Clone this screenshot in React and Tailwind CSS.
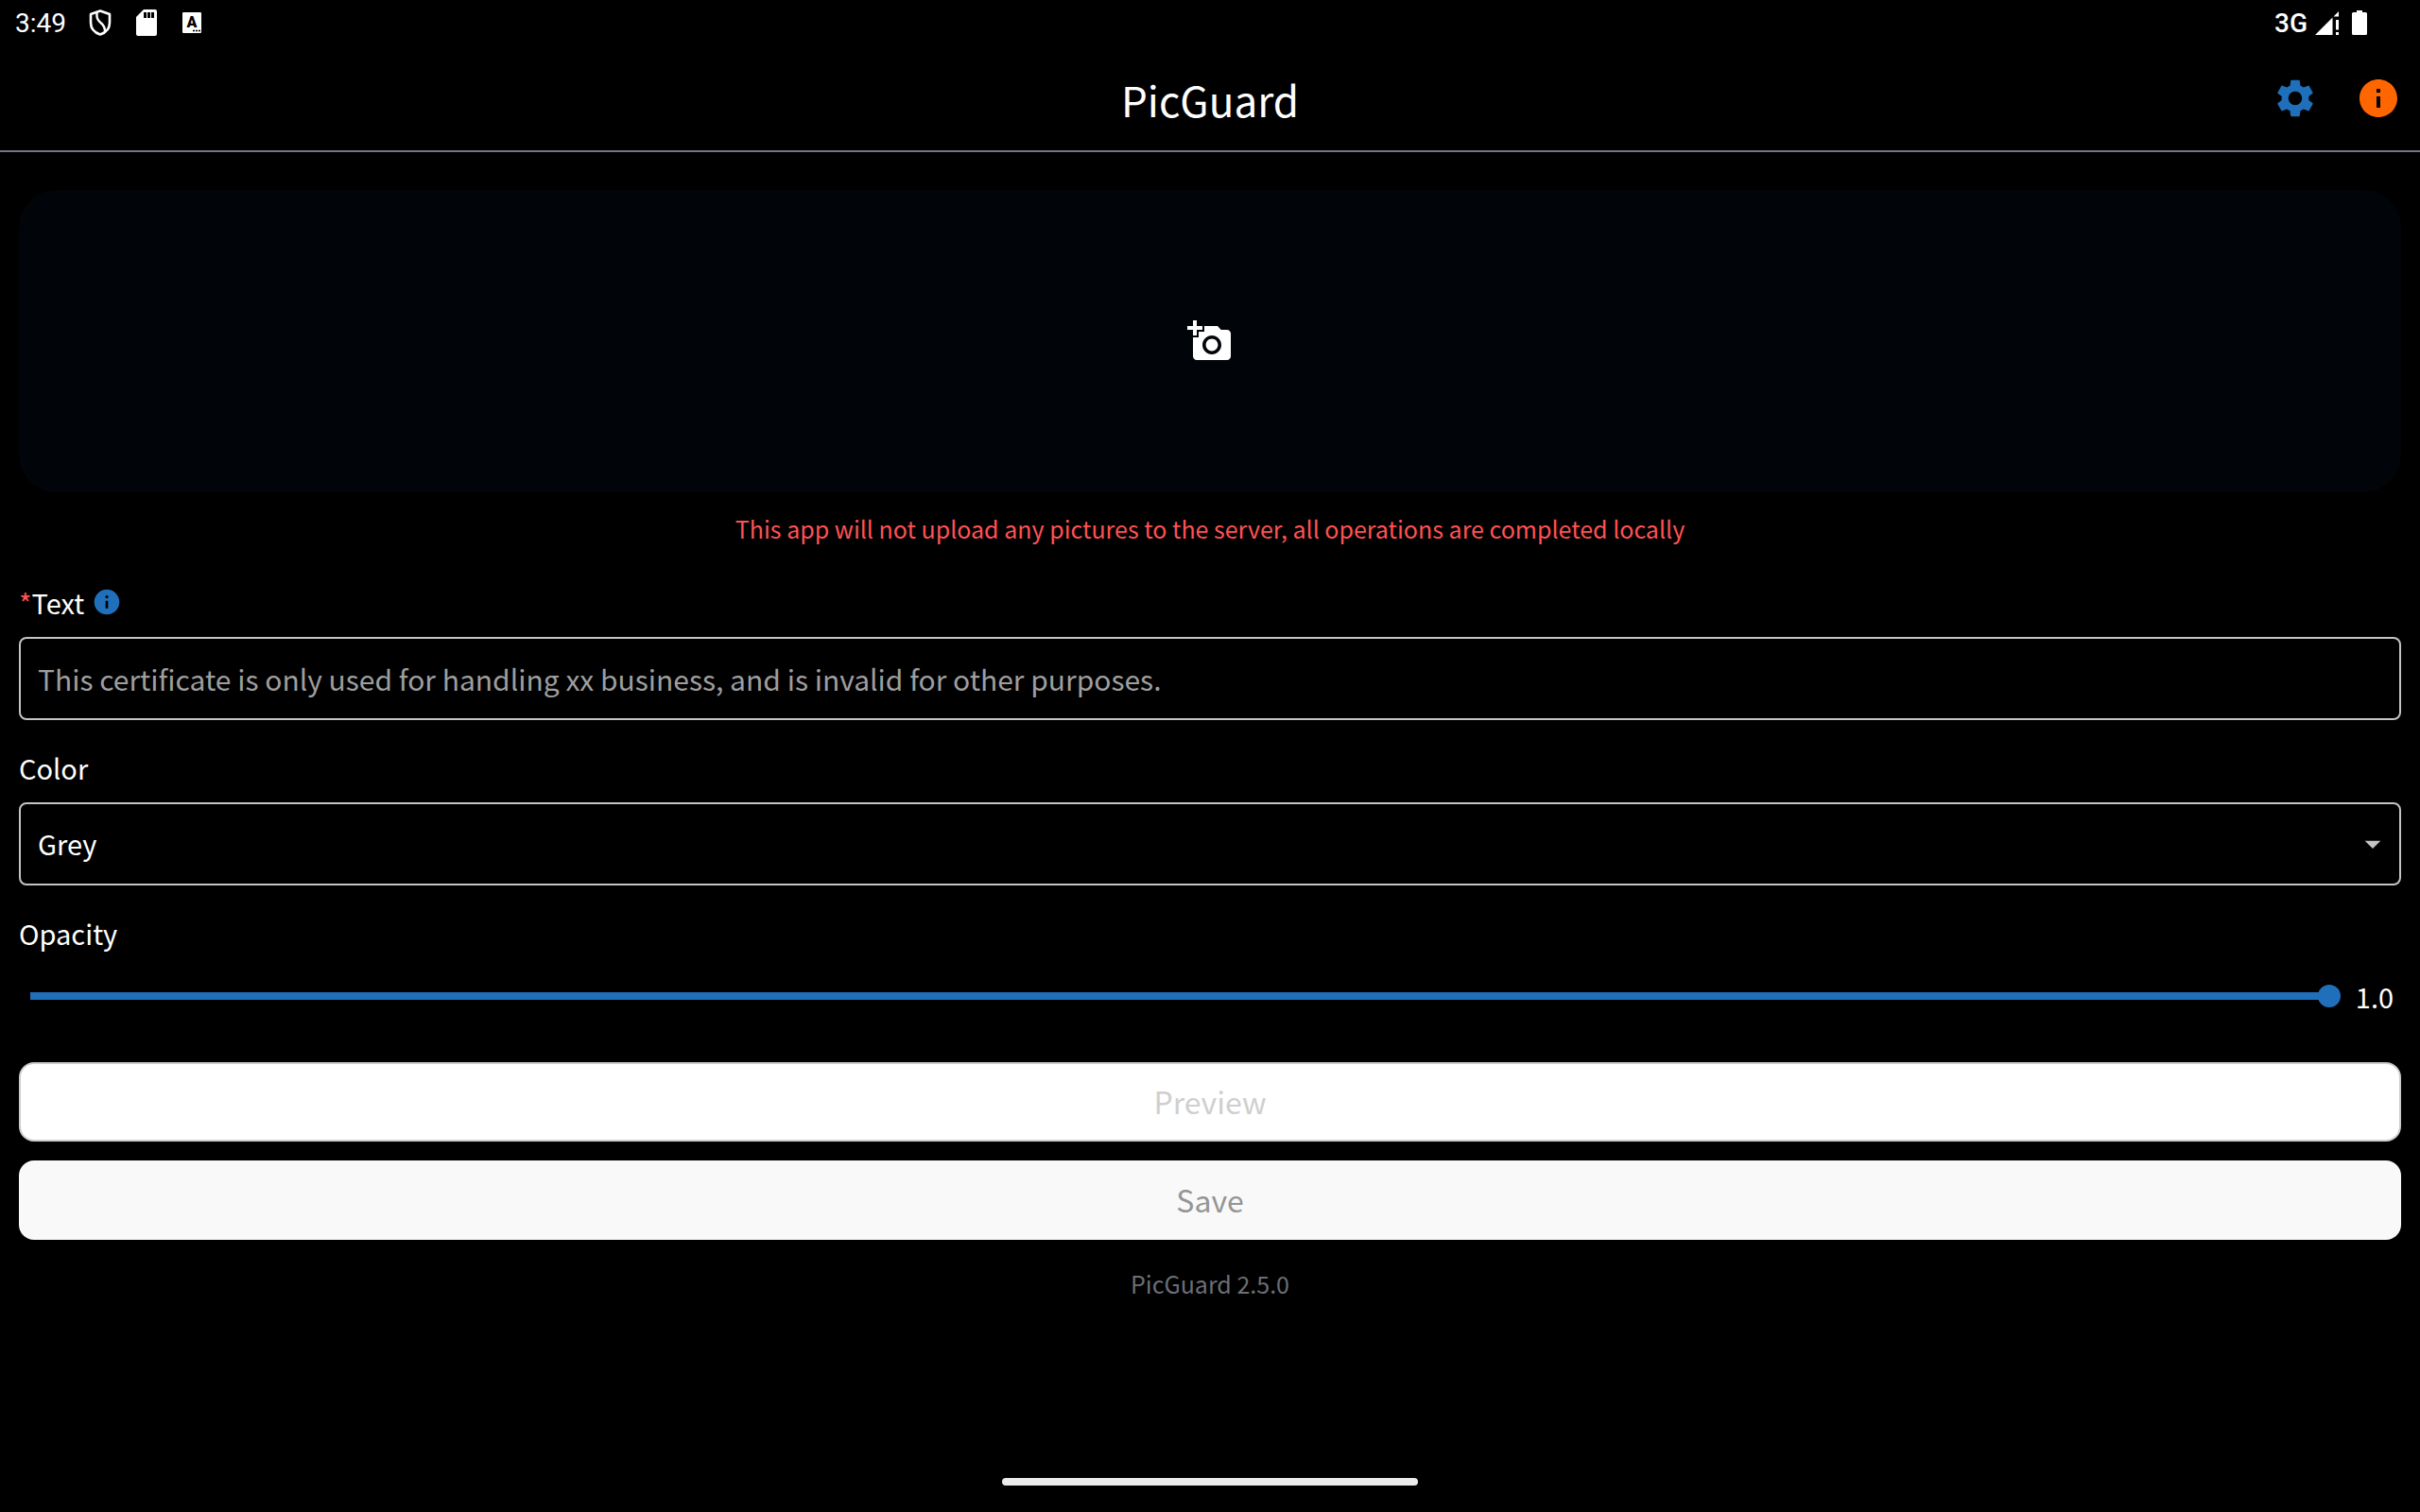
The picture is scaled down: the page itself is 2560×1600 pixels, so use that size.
import { useState } from "react";
import { MdSettings, MdInfo, MdAddAPhoto, MdArrowDropDown } from "react-icons/md";

function StatusBar() {
  return (
    <div className="flex h-12 items-center justify-between pr-14 pl-4 font-[Roboto,sans-serif] text-[28px] leading-8">
      <div className="flex items-center">
        <span className="pt-[2px]">3:49</span>
        <svg className="ml-6 h-7 w-6" viewBox="0 0 24 28" fill="none" stroke="currentColor" strokeWidth="2.6" strokeLinejoin="round">
          <path d="M12 1.500L22 5v9c0 6-4 10.500-10 12.500C6 24.500 2 20 2 14V5z" />
          <path d="M8.500 3v4c0 3 1.500 5 4.500 7.500 3 2.500 4 4.500 4 8.500" strokeWidth="2.4" />
        </svg>
        <svg className="ml-[26px] h-7 w-[22px]" viewBox="0 0 22 28" fill="currentColor">
          <path fillRule="evenodd" d="M8 0h12a2 2 0 0 1 2 2v24a2 2 0 0 1-2 2H2a2 2 0 0 1-2-2V8zM8 3v6h3V3zM12 3v6h3V3zM16 3v6h3V3z" />
        </svg>
        <svg className="ml-[27px] h-[22px] w-5" viewBox="0 0 20 22" role="img" aria-label="Keyboard">
          <rect width="20" height="22" rx="1" fill="#fff" />
          <text x="10" y="16" textAnchor="middle" fontFamily="Roboto, sans-serif" fontWeight="900" fontSize="16" fill="#000">A</text>
          <circle cx="12" cy="19.500" r="1.100" fill="#000" />
          <circle cx="15" cy="19.500" r="1.100" fill="#000" />
          <circle cx="18" cy="19.500" r="1.100" fill="#000" />
        </svg>
      </div>
      <div className="flex items-center">
        <span className="pt-[2px] font-medium">3G</span>
        <svg className="ml-2 h-[25px] w-[25px]" viewBox="0 0 25 25" fill="currentColor">
          <path d="M0 25L18.500 6.500V25zM19.500 5.500L25 0v5.500zM22 9h3v10.500h-3zM22 22h3v3h-3z" />
        </svg>
        <svg className="ml-[14px] h-[26px] w-4" viewBox="0 0 16 26" fill="currentColor">
          <path d="M5 0h6v2h3.500A1.500 1.500 0 0 1 16 3.500v21a1.500 1.500 0 0 1-1.500 1.500h-13A1.500 1.500 0 0 1 0 24.500v-21A1.500 1.500 0 0 1 1.500 2H5z" />
        </svg>
      </div>
    </div>
  );
}

function AppBar() {
  return (
    <header className="grid h-[113px] grid-cols-[1fr_auto_1fr] items-center border-b-2 border-[#74777f] px-5">
      <h1 className="col-start-2 pt-[2px] text-[44px] leading-[64px]">PicGuard</h1>
      <div className="flex justify-end gap-10">
        <button type="button" aria-label="Settings" className="text-[#1f6fbb]">
          <MdSettings size={48} />
        </button>
        <button type="button" aria-label="About" className="text-[#ff6600]">
          <MdInfo size={48} />
        </button>
      </div>
    </header>
  );
}

const labelClass = "block text-[29px] leading-10";
const boxClass = "h-[88px] w-full rounded-lg border-2 border-[#c4c4c4] bg-black px-[18px]";

export default function App() {
  const [text, setText] = useState("");
  const [opacity, setOpacity] = useState(1);

  return (
    <div className="flex min-h-screen flex-col bg-black font-['Noto_Sans_CJK_SC',sans-serif] text-white">
      <StatusBar />
      <AppBar />
      <main className="flex flex-col px-5 pt-10">
        <button type="button" aria-label="Add a photo" className="flex h-80 items-center justify-center rounded-[40px] bg-[#010409]">
          <MdAddAPhoto size={48} />
        </button>
        <p className="mt-5 text-center text-[25px] leading-9 text-[#ff5252]">
          This app will not upload any pictures to the server, all operations are completed locally
        </p>

        <div className="mt-10 flex items-center gap-2">
          <label htmlFor="mark-text" className={labelClass}>
            <span className="text-[#ff5252]">*</span>Text
          </label>
          <button type="button" aria-label="Text help" className="text-[#1f6fbb]">
            <MdInfo size={32} />
          </button>
        </div>
        <input
          id="mark-text"
          type="text"
          value={text}
          onChange={(e) => setText(e.target.value)}
          placeholder="This certificate is only used for handling xx business, and is invalid for other purposes."
          className={`mt-[17px] text-[30px] placeholder:text-[#9e9e9e] ${boxClass}`}
        />

        <label htmlFor="mark-color" className={`mt-[30px] ${labelClass}`}>Color</label>
        <div className="relative mt-[17px]">
          <select id="mark-color" defaultValue="Grey" className={`block appearance-none text-[29px] ${boxClass}`}>
            <option>Grey</option>
          </select>
          <MdArrowDropDown size={40} className="pointer-events-none absolute inset-y-0 right-[10px] my-auto text-[#c4c4c4]" />
        </div>

        <label htmlFor="mark-opacity" className={`mt-[30px] ${labelClass}`}>Opacity</label>
        <div className="mt-[23px] flex items-center">
          <input
            id="mark-opacity"
            type="range"
            min="0"
            max="1"
            step="0.1"
            value={opacity}
            onChange={(e) => setOpacity(Number(e.target.value))}
            className="h-12 min-w-0 flex-1 appearance-none bg-transparent [&::-webkit-slider-runnable-track]:h-2 [&::-webkit-slider-runnable-track]:bg-[linear-gradient(#1f6fbb,#1f6fbb)] [&::-webkit-slider-runnable-track]:bg-[length:calc(100%-24px)_100%] [&::-webkit-slider-runnable-track]:bg-center [&::-webkit-slider-runnable-track]:bg-no-repeat [&::-webkit-slider-thumb]:-mt-2 [&::-webkit-slider-thumb]:size-6 [&::-webkit-slider-thumb]:appearance-none [&::-webkit-slider-thumb]:rounded-full [&::-webkit-slider-thumb]:bg-[#1f6fbb]"
          />
          <output htmlFor="mark-opacity" className="ml-2 w-14 text-center text-[29px] leading-10">
            {opacity.toFixed(1)}
          </output>
        </div>

        <button type="button" disabled className="mt-[46px] h-[84px] rounded-2xl border-2 border-[#cccccc] bg-white pb-[2px] text-[32px] text-[#cfcfcf]">
          Preview
        </button>
        <button type="button" disabled className="mt-5 h-[84px] rounded-2xl bg-[#f9f9f9] pb-[2px] text-[32px] text-[#959595]">
          Save
        </button>
        <p className="mt-7 text-center text-[25px] leading-9 text-[#6b6e76]">PicGuard 2.5.0</p>
      </main>
      <div className="mx-auto mt-auto mb-7 h-2 w-[440px] rounded bg-[#ebebeb]" />
    </div>
  );
}
